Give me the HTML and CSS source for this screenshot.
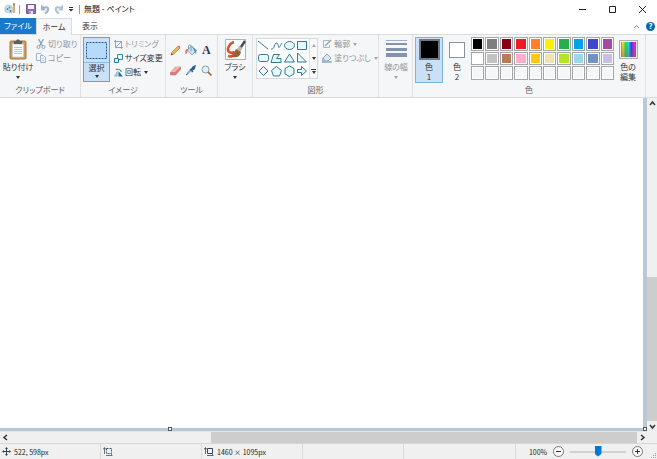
FILE: index.html
```html
<!DOCTYPE html>
<html lang="ja">
<head>
    <meta charset="UTF-8">
    <meta name="viewport" content="width=device-width, initial-scale=1.0">
    <title>無題 - ペイント</title>
    <link rel="stylesheet" href="styles.css">
</head>
<body>
    <header class="titlebar">
        <svg class="logo" viewBox="0 0 12 12" width="12" height="12">
            <path d="M1 7C0 3 4 1 7 3C10 5 10 9 7 10C5 11 5 8 4 9C2 10 1 9 1 7Z" fill="#c3e3ef" stroke="#8fc1d2" stroke-width=".8"/>
            <circle cx="3.5" cy="6" r="1" fill="#e1573f"/><circle cx="5.5" cy="4.5" r="1" fill="#5aae4a"/><circle cx="6.5" cy="8" r="1" fill="#4377c4"/>
            <path d="M10 1V10" stroke="#dfa75e" stroke-width="1.8"/><path d="M10 0V3" stroke="#a58a6b" stroke-width="1.6"/>
        </svg>
        <span class="bar"></span>
        <button class="quick" aria-label="保存">
            <svg viewBox="0 0 10 10" width="10" height="10"><path d="M.5.5h9v9h-9z" fill="#8c6fb5" stroke="#75599f"/><path d="M2 1h6v4H2z" fill="#f5f0fb"/><path d="M3 7h4v3H3z" fill="#e5dcf0"/><path d="M4 7.5v2" stroke="#553b80"/></svg>
        </button>
        <button class="quick" aria-label="元に戻す">
            <svg viewBox="0 0 10 10" width="10" height="10"><path d="M3 3.500H5C9 2.500 9.500 6.500 5 9.500" fill="none" stroke="#a5b4ca" stroke-width="2.200"/><path d="M1 0v6.500h5z" fill="#a5b4ca"/></svg>
        </button>
        <button class="quick" aria-label="やり直し">
            <svg viewBox="0 0 10 10" width="10" height="10"><path d="M7 3.500H5C1 2.500 .5 6.500 5 9.500" fill="none" stroke="#b3c1d4" stroke-width="2.200"/><path d="M9 0v6.500H4z" fill="#b3c1d4"/></svg>
        </button>
        <button class="more" aria-label="クイック アクセスのカスタマイズ">
            <svg viewBox="0 0 6 6" width="6" height="6"><path d="M1 1.500h4" stroke="#333"/><path d="M.5 3h5L3 5.500z" fill="#333"/></svg>
        </button>
        <span class="bar"></span>
        <h1>無題 - ペイント</h1>
        <div class="window-buttons">
            <button aria-label="最小化"><svg viewBox="0 0 9 9" width="9" height="9"><path d="M1 4.5h7" stroke="#222"/></svg></button>
            <button aria-label="最大化"><svg viewBox="0 0 9 9" width="9" height="9"><path d="M1.5 1.5h6v6h-6z" fill="none" stroke="#222"/></svg></button>
            <button aria-label="閉じる"><svg viewBox="0 0 9 9" width="9" height="9"><path d="M1 1l7 7M8 1L1 8" stroke="#222"/></svg></button>
        </div>
    </header>

    <nav class="tabs">
        <button class="tab file">ファイル</button>
        <button class="tab active">ホーム</button>
        <button class="tab view">表示</button>
        <span class="tab-tools">
            <button aria-label="リボンの最小化"><svg viewBox="0 0 7 5" width="7" height="5"><path d="M1 4l2.5-2.5L6 4" fill="none" stroke="#888"/></svg></button>
            <button class="help" aria-label="ヘルプ">?</button>
        </span>
    </nav>

    <main class="ribbon">
        <section class="group clipboard">
            <div class="tools">
                <button class="big">
                    <svg viewBox="0 0 18 21" width="18" height="21"><rect x="1" y="2" width="16" height="18" rx="1" fill="#c99c5d" stroke="#a47b42"/><path d="M3.5 5h11v13h-11z" fill="#fff" stroke="#ccc"/><path d="M5 8.500h8M5 10.500h8M5 12.500h8M5 14.500h8" stroke="#b9c4cf"/><path d="M5 2h2l1-1.500h2L11 2h2v3H5z" fill="#5c6064"/></svg>
                    <span>貼り付け</span><i class="arrow"></i>
                </button>
                <div class="list">
                    <button class="small" disabled><svg viewBox="0 0 10 10" width="10" height="10"><path d="M2.500 0l4 7M7.500 0l-4 7" stroke="#8f9daf" stroke-width="1.300"/><circle cx="2.500" cy="8" r="1.500" fill="none" stroke="#8ba4bf"/><circle cx="7.500" cy="8" r="1.500" fill="none" stroke="#8ba4bf"/></svg>切り取り</button>
                    <button class="small" disabled><svg viewBox="0 0 10 10" width="10" height="10"><path d="M.5.5h4l1 1v6h-5z" fill="#f5f9fd" stroke="#9eb3ca"/><path d="M4.500 2.500h3l2 2v5h-5z" fill="#eef5fb" stroke="#9eb3ca"/><path d="M6 5.500h2M6 7.500h2" stroke="#b7c9dc"/></svg>コピー</button>
                </div>
            </div>
            <h2>クリップボード</h2>
        </section>

        <section class="group image">
            <div class="tools">
                <div class="select">
                    <button aria-label="選択範囲"><svg viewBox="0 0 21 17" width="21" height="17"><path d="M.5.5h20v16H.5z" fill="#b6dafa" stroke="#245b92" stroke-dasharray="2 1"/></svg></button>
                    <button><span>選択</span><i class="arrow"></i></button>
                </div>
                <div class="list">
                    <button class="small" disabled><svg viewBox="0 0 9 9" width="9" height="9"><path d="M1.500 0v7.500H9M0 1.500h7.500V9M2 7l6-6" fill="none" stroke="#91a6b9"/></svg>トリミング</button>
                    <button class="small"><svg viewBox="0 0 9 9" width="9" height="9"><path d="M3.500.5h5v5h-5z" fill="#edf9ff" stroke="#3189ad"/><path d="M.5 4.500h4v4h-4z" fill="#d3effa" stroke="#277b9e"/></svg>サイズ変更</button>
                    <button class="small"><svg viewBox="0 0 10 9" width="9" height="9"><path d="M4 2v7H0z" fill="#96b9d0"/><path d="M5 3v6h5z" fill="#17709e"/><path d="M2 1h3q3 0 3 3" fill="none" stroke="#286f93"/></svg>回転<i class="arrow"></i></button>
                </div>
            </div>
            <h2>イメージ</h2>
        </section>

        <section class="group drawing">
            <div class="tools">
                <button aria-label="鉛筆"><svg viewBox="0 0 11 11" width="11" height="11"><path d="M1 10l1-3 6-6 2 2-6 6z" fill="#e6b563" stroke="#b27c37" stroke-width=".6"/><path d="M1 10l.6-1.700L3 9.500z" fill="#333"/><path d="M7.500 1.500l2 2L10.500 2 9 .5z" fill="#d77c65"/></svg></button>
                <button aria-label="塗りつぶし"><svg viewBox="0 0 12 12" width="12" height="12"><path d="M2.500 6l4-4 5 4.500-4.500 4.500z" fill="#cfe4f2" stroke="#6f9dbd" stroke-width=".8"/><path d="M6 7V1.500Q4 0 3.500 2v3" fill="none" stroke="#69899d" stroke-width=".8"/><path d="M3 5C0 5 0 7 .5 10c1.500 0 2-2 2.500-5z" fill="#e0755c"/><path d="M7 2l4.500 4.500L11 10 9 6.500z" fill="#4d8fc4"/></svg></button>
                <button class="text-tool" aria-label="テキスト">A</button>
                <button aria-label="消しゴム"><svg viewBox="0 0 11 11" width="11" height="11"><path d="M.5 7.500l5-5.500h5v2.500L5.500 10h-5z" fill="#dd7a75" stroke="#c86e6b" stroke-width=".6"/><path d="M1 7l5-5h4L5 7z" fill="#f3b7ad"/></svg></button>
                <button aria-label="色の選択"><svg viewBox="0 0 11 11" width="11" height="11"><path d="M2 9l4-4" stroke="#81afd0" stroke-width="2"/><path d="M5 4l3 3M6 5l2-3 2-1-1 3-2 1" fill="#286aa1" stroke="#285a88" stroke-width="1.300"/><path d="M1 10l1.500-1" stroke="#32617f"/></svg></button>
                <button aria-label="拡大鏡"><svg viewBox="0 0 11 11" width="11" height="11"><circle cx="4.500" cy="4.500" r="3.500" fill="#e0f3fd" stroke="#8698a8"/><path d="M7 7l3.500 3.500" stroke="#a17750" stroke-width="1.800"/></svg></button>
            </div>
            <h2>ツール</h2>
        </section>

        <section class="group brushes">
            <button class="big">
                <svg viewBox="0 0 21 21" width="21" height="21"><path d="M.5.5h20v20H.5z" fill="#f7fbfd" stroke="#abb1b7"/><path d="M9 3C5 4 1 10 4 13C7 15 9 12 9 14C9 17 6 18 3 17" fill="none" stroke="#d9512b" stroke-width="2.500"/><path d="M20 2L14 11" stroke="#444b52" stroke-width="2.500"/><path d="M16 8l-3 4" stroke="#b8b9b8" stroke-width="4"/><path d="M11 10l5 3c-1 5-5 6-9 5 3-2 2-5 4-8z" fill="#926334"/></svg>
                <span>ブラシ</span><i class="arrow"></i>
            </button>
        </section>

        <section class="group shapes">
            <div class="tools">
                <div class="gallery">
                    <svg class="shape-list" viewBox="0 0 52 38" role="img" aria-label="図形">
                        <g fill="#e9f8fc" stroke="#327793">
                            <path d="M1 2l10 8"/><path d="M14 10c4 1 3-7 6-6 3 4 0 8 5 0" fill="none"/><ellipse cx="32.500" cy="6.500" rx="5" ry="4"/><path d="M40.500 2.500h9v8h-9z"/>
                            <rect x="1.500" y="15.500" width="10" height="7" rx="2"/><path d="M14 23.500l2.500-8h6l-3 4h4.500v4z"/><path d="M32.500 15l5 8h-10z"/><path d="M40.500 14v9h9z"/>
                            <path d="M6.500 27.500l4.500 4.500-4.500 4.500L2 32z"/><path d="M19.500 27.500l5 4-2 5.500h-6l-2-5.500z"/><path d="M32.500 27l4.500 2.500v5.500l-4.500 2.500-4.500-2.500v-5.500z"/><path d="M40.500 30.500h4v-3l5 4.500-5 4.500v-3h-4z"/>
                        </g>
                    </svg>
                    <div class="gallery-scroll">
                        <button aria-label="上へ" disabled><i class="arrow up"></i></button>
                        <button aria-label="下へ"><i class="arrow"></i></button>
                        <button class="all" aria-label="すべての図形"><i class="arrow"></i></button>
                    </div>
                </div>
                <div class="list">
                    <button class="small" disabled><svg viewBox="0 0 10 10" width="10" height="10"><path d="M7 1.500H1.500v7h6V6" fill="none" stroke="#a9b5c0"/><path d="M3 7l6-6" stroke="#94a2b0" stroke-width="1.500"/></svg>輪郭<i class="arrow"></i></button>
                    <button class="small" disabled><svg viewBox="0 0 10 10" width="10" height="10"><path d="M1 5l4-4 4 4-3 3H3z" fill="#dbe7f1" stroke="#8fa6bb"/><path d="M0 9h10M1 5v4" stroke="#90a9c1" stroke-width="1.500"/></svg>塗りつぶし<i class="arrow"></i></button>
                </div>
            </div>
            <h2>図形</h2>
        </section>

        <section class="group line-size">
            <button class="big" disabled>
                <svg viewBox="0 0 21 21" width="21" height="21"><path d="M0 1.500h21" stroke="#a2afc1"/><path d="M0 5h21" stroke="#8393ad" stroke-width="2"/><path d="M0 10.500h21" stroke="#8393ad" stroke-width="3"/><path d="M0 16h21" stroke="#8393ad" stroke-width="4"/></svg>
                <span>線の幅</span><i class="arrow"></i>
            </button>
        </section>

        <section class="group colors">
            <div class="tools">
                <button class="color-slot current"><i class="chip black"></i><span>色<br>1</span></button>
                <button class="color-slot"><i class="chip white"></i><span>色<br>2</span></button>
                <div class="palette">
                    <button aria-label="黒"></button><button aria-label="灰色"></button><button aria-label="濃い赤"></button><button aria-label="赤"></button><button aria-label="オレンジ"></button>
                    <button aria-label="黄"></button><button aria-label="緑"></button><button aria-label="水色"></button><button aria-label="藍"></button><button aria-label="紫"></button>
                    <button aria-label="白"></button><button aria-label="薄い灰色"></button><button aria-label="茶"></button><button aria-label="ローズ"></button><button aria-label="ゴールド"></button>
                    <button aria-label="薄い黄"></button><button aria-label="ライム"></button><button aria-label="薄い水色"></button><button aria-label="青灰色"></button><button aria-label="ラベンダー"></button>
                    <button aria-label="空き 1"></button><button aria-label="空き 2"></button><button aria-label="空き 3"></button><button aria-label="空き 4"></button><button aria-label="空き 5"></button>
                    <button aria-label="空き 6"></button><button aria-label="空き 7"></button><button aria-label="空き 8"></button><button aria-label="空き 9"></button><button aria-label="空き 10"></button>
                </div>
                <button class="color-slot edit"><i class="rainbow"></i><span>色の<br>編集</span></button>
            </div>
            <h2>色</h2>
        </section>
    </main>

    <div class="workspace">
        <div class="canvas-area"><div class="canvas"></div><i class="handle bottom"></i><i class="handle corner"></i></div>
        <div class="scroll vertical">
            <button aria-label="上へスクロール"><svg viewBox="0 0 7 7" width="7" height="7"><path d="M1 5l2.500-3L6 5" fill="none" stroke="#333" stroke-width="1.500"/></svg></button>
            <div class="track"><div class="thumb"></div></div>
            <button aria-label="下へスクロール"><svg viewBox="0 0 7 7" width="7" height="7"><path d="M1 2l2.500 3L6 2" fill="none" stroke="#333" stroke-width="1.500"/></svg></button>
        </div>
        <div class="scroll horizontal">
            <button aria-label="左へスクロール"><svg viewBox="0 0 7 7" width="7" height="7"><path d="M5 1L2 3.500 5 6" fill="none" stroke="#333" stroke-width="1.500"/></svg></button>
            <div class="track"><div class="thumb"></div></div>
            <button aria-label="右へスクロール"><svg viewBox="0 0 7 7" width="7" height="7"><path d="M2 1l3 2.500L2 6" fill="none" stroke="#333" stroke-width="1.500"/></svg></button>
        </div>
    </div>

    <footer class="status">
        <div class="cell"><svg viewBox="0 0 9 9" width="9" height="9"><path d="M4.500 1v7M1 4.500h7" stroke="#354450"/><path d="M3 2l1.500-2L6 2M3 7l1.500 2L6 7M2 3L0 4.500 2 6M7 3l2 1.500L7 6" fill="#354450"/></svg>522, 598px</div>
        <div class="cell"><svg viewBox="0 0 10 9" width="10" height="9"><path d="M3.500 1.500h5v5h-5z" fill="none" stroke="#41566b" stroke-dasharray="2 1"/><path d="M1.500 1v6M0 2.500L1.500.5 3 2.500M3 8.500h6M8 7l1.500 1.500" fill="none" stroke="#41566b" stroke-width=".8"/></svg></div>
        <div class="cell"><svg viewBox="0 0 10 9" width="10" height="9"><path d="M3.500 1.500h5v5h-5z" fill="none" stroke="#35495c"/><path d="M1.500 1v6M0 2.500L1.500.5 3 2.500M3 8.500h6M8 7l1.500 1.500" fill="none" stroke="#35495c" stroke-width=".8"/></svg>1460 × 1095px</div>
        <div class="cell"></div>
        <div class="cell wide"></div>
        <div class="zoom">
            <label for="zoom">100%</label>
            <button aria-label="縮小"><svg viewBox="0 0 11 11" width="11" height="11"><circle cx="5.500" cy="5.500" r="5" fill="#fafafa" stroke="#777"/><path d="M3 5.500h5" stroke="#333"/></svg></button>
            <input type="range" id="zoom" min="0" max="100" value="50">
            <button aria-label="拡大"><svg viewBox="0 0 11 11" width="11" height="11"><circle cx="5.500" cy="5.500" r="5" fill="#fafafa" stroke="#777"/><path d="M3 5.500h5M5.500 3v5" stroke="#333"/></svg></button>
        </div>
        <svg class="grip" viewBox="0 0 6 6" width="6" height="6"><path d="M4 0h1v1H4zM2 2h1v1H2zM4 2h1v1H4zM0 4h1v1H0zM2 4h1v1H2zM4 4h1v1H4z" fill="#aaa"/></svg>
    </footer>
</body>
</html>
```

FILE: styles.css
```css
* {
    box-sizing: border-box;
}
body {
    display: flex;
    flex-direction: column;
    height: 100vh;
    margin: 0;
    background-color: #FFFFFF;
    color: #333333;
    font-family: "Noto Sans CJK JP", sans-serif;
    font-size: 8px;
    line-height: 10px;
    font-feature-settings: "palt";
}
button {
    display: flex;
    align-items: center;
    justify-content: center;
    padding: 0;
    border: none;
    background: none;
    color: inherit;
    font: inherit;
    font-feature-settings: inherit;
    white-space: nowrap;
}
button:disabled {
    color: #8F9498;
}
svg {
    display: block;
    flex: none;
}
h1, h2 {
    margin: 0;
    font-size: 8px;
    font-weight: normal;
    white-space: nowrap;
}

/* タイトルバー */
.titlebar {
    display: flex;
    align-items: center;
    height: 18px;
    padding-left: 4px;
}
.bar {
    width: 1px;
    height: 9px;
    margin: 0 4px 0 3px;
    background-color: #999999;
}
.quick {
    width: 14px;
}
.more {
    width: 10px;
}
.titlebar h1 {
    flex: 1;
    color: #111111;
}
.window-buttons {
    display: flex;
}
.window-buttons button {
    width: 30px;
    height: 16px;
}

/* タブ */
.tabs {
    display: flex;
    height: 16px;
}
.tab {
    width: 36px;
    border: 1px solid transparent;
}
.file {
    background-color: #1979CA;
    color: #FFFFFF;
}
.active {
    height: 17px;
    z-index: 1;
    background-color: #F5F6F7;
    border-color: #DADBDC;
    border-bottom: none;
}
.tab-tools {
    display: flex;
    align-items: center;
    gap: 6px;
    margin-left: auto;
    padding-right: 2px;
}
.help {
    width: 9px;
    height: 9px;
    border-radius: 50%;
    background-color: #0068B5;
    color: #FFFFFF;
    font-weight: bold;
}

/* リボン */
.ribbon {
    display: flex;
    height: 64px;
    border: 1px solid #DADBDC;
    border-width: 1px 0;
    background-color: #F5F6F7;
}
.group {
    display: flex;
    flex-direction: column;
    flex: none;
    padding-top: 2px;
    border-right: 1px solid #E0E1E3;
}
.tools {
    display: flex;
    align-items: flex-start;
    height: 48px;
}
.group h2 {
    color: #5E6266;
    text-align: center;
}
.clipboard {
    width: 81px;
}
.image {
    width: 85px;
}
.drawing {
    width: 52px;
}
.brushes {
    width: 35px;
}
.shapes {
    width: 126px;
}
.line-size {
    width: 34px;
}
.colors {
    width: 233px;
}
.arrow {
    width: 0;
    height: 0;
    border: 2px solid transparent;
    border-top: 3px solid #333333;
    border-bottom: none;
}
button:disabled .arrow {
    border-top-color: #A0A4A8;
}
.arrow.up {
    transform: rotate(180deg);
}
.big {
    flex-direction: column;
    justify-content: flex-start;
    width: 34px;
    padding-top: 2px;
    gap: 2px;
}
.big .arrow {
    margin-top: 2px;
}
.clipboard .big {
    width: 36px;
}
.list {
    display: flex;
    flex-direction: column;
    align-items: flex-start;
    gap: 4px;
    padding-top: 2px;
}
.small {
    gap: 2px;
}
.small .arrow {
    margin-left: 1px;
}
.image .tools {
    gap: 4px;
    padding-left: 2px;
}
.select {
    width: 27px;
    height: 45px;
    border: 1px solid #62A2D8;
    background-color: #C9E0F7;
}
.select button {
    flex-direction: column;
    gap: 2px;
    width: 100%;
    height: 24px;
}
.select button + button {
    justify-content: flex-start;
    height: 19px;
    border-top: 1px solid #8BBBE4;
}
.drawing .tools {
    display: grid;
    grid-template-columns: repeat(3, 1fr);
    align-content: start;
    row-gap: 4px;
    padding: 5px 3px 0 2px;
}
.drawing .tools button {
    height: 16px;
}
.drawing .text-tool {
    color: #1F3C59;
    font: bold 12px "Liberation Serif", serif;
}
.shapes .tools {
    gap: 4px;
    padding-left: 3px;
}
.gallery {
    display: flex;
    width: 64px;
    height: 41px;
    margin-top: 1px;
    border: 1px solid #D5D8DC;
    background-color: #FFFFFF;
}
.shape-list {
    width: 52px;
    height: 38px;
}
.gallery-scroll {
    display: flex;
    flex: 1;
    flex-direction: column;
    border-left: 1px solid #DDE0E3;
    background-color: #F8F9FA;
}
.gallery-scroll button {
    flex: 1;
}
.gallery-scroll .all {
    flex-direction: column;
    gap: 1px;
}
.all::before {
    content: "";
    width: 5px;
    height: 1px;
    background-color: #333333;
}
.colors .tools {
    padding-left: 2px;
}
.color-slot {
    flex-direction: column;
    justify-content: flex-start;
    width: 28px;
    height: 46px;
    padding-top: 1px;
    gap: 2px;
    border: 1px solid transparent;
}
.color-slot.current {
    border-color: #7DB2DE;
    background-color: #C9E0F7;
}
.chip {
    width: 21px;
    height: 21px;
    border: 1px solid #8B9299;
}
.black {
    border: 2px solid #6F7880;
    background-color: #000000;
}
.white {
    width: 16px;
    height: 16px;
    margin: 3px 0 2px;
    background-color: #FFFFFF;
}
.palette {
    display: grid;
    grid-template-columns: repeat(10, 1fr);
    gap: 1px;
    width: 143px;
    height: 43px;
}
.palette button {
    border: 1px solid #A5A6A8;
    box-shadow: inset 0 0 0 1px #FFFFFF;
}
.palette button:nth-child(1) { background-color: #000000; }
.palette button:nth-child(2) { background-color: #7F7F7F; }
.palette button:nth-child(3) { background-color: #880015; }
.palette button:nth-child(4) { background-color: #ED1C24; }
.palette button:nth-child(5) { background-color: #FF7F27; }
.palette button:nth-child(6) { background-color: #FFF200; }
.palette button:nth-child(7) { background-color: #22B14C; }
.palette button:nth-child(8) { background-color: #00A2E8; }
.palette button:nth-child(9) { background-color: #3F48CC; }
.palette button:nth-child(10) { background-color: #A349A4; }
.palette button:nth-child(11) { background-color: #FFFFFF; }
.palette button:nth-child(12) { background-color: #C3C3C3; }
.palette button:nth-child(13) { background-color: #B97A57; }
.palette button:nth-child(14) { background-color: #FFAEC9; }
.palette button:nth-child(15) { background-color: #FFC90E; }
.palette button:nth-child(16) { background-color: #EFE4B0; }
.palette button:nth-child(17) { background-color: #B5E61D; }
.palette button:nth-child(18) { background-color: #99D9EA; }
.palette button:nth-child(19) { background-color: #7092BE; }
.palette button:nth-child(20) { background-color: #C8BFE7; }
.rainbow {
    width: 19px;
    height: 19px;
    margin: 1px 0;
    border: 1px solid #B7A9A5;
    box-shadow: inset 0 0 0 1px #EEEEEE;
    background: linear-gradient(to bottom, transparent, #66666688), linear-gradient(to right, #FF2A2A, #FFF01A, #1FE04A, #1FD8FF, #3A30F0, #F020E0, #FF2A2A);
}

/* 作業領域 */
.workspace {
    display: grid;
    flex: 1;
    grid-template-columns: 1fr 10px;
    grid-template-rows: 1fr 11px;
    min-height: 0;
    background-color: #F0F0F0;
}
.canvas-area {
    position: relative;
    padding: 0 4px 3px 0;
    background-color: #BAC7D7;
    border-bottom: 1px solid #DDE4EC;
}
.canvas {
    height: 100%;
    background-color: #FFFFFF;
}
.handle {
    position: absolute;
    bottom: 0;
    width: 4px;
    height: 4px;
    border: 1px solid #555555;
    background-color: #FFFFFF;
}
.handle.bottom {
    left: 26%;
}
.handle.corner {
    right: 0;
}
.scroll {
    display: flex;
}
.vertical {
    flex-direction: column;
}
.scroll button {
    width: 10px;
    height: 11px;
}
.track {
    display: flex;
    flex: 1;
    justify-content: flex-end;
}
.vertical .track {
    flex-direction: column;
}
.thumb {
    background-color: #CDCDCD;
}
.vertical .thumb {
    height: 46%;
}
.horizontal .thumb {
    width: 68%;
}

/* ステータスバー */
.status {
    display: flex;
    height: 16px;
    border-top: 1px solid #D7D7D7;
    background-color: #F0F0F0;
    color: #222222;
    font-size: 7px;
}
.cell {
    display: flex;
    align-items: center;
    gap: 3px;
    width: 101px;
    padding-left: 2px;
    border-right: 1px solid #DADADA;
}
.cell.wide {
    width: 112px;
}
.zoom {
    display: flex;
    flex: 1;
    align-items: center;
    justify-content: flex-end;
    gap: 6px;
    padding-right: 8px;
}
.zoom input {
    width: 56px;
    height: 12px;
    margin: 0;
    background: none;
    appearance: none;
}
.zoom input::-webkit-slider-runnable-track {
    height: 2px;
    background-color: #D2D2D2;
}
.zoom input::-webkit-slider-thumb {
    width: 7px;
    height: 11px;
    margin-top: -5px;
    background-color: #0078D7;
    clip-path: polygon(0 0, 100% 0, 100% 75%, 50% 100%, 0 75%);
    appearance: none;
}
.grip {
    align-self: flex-end;
}
```
